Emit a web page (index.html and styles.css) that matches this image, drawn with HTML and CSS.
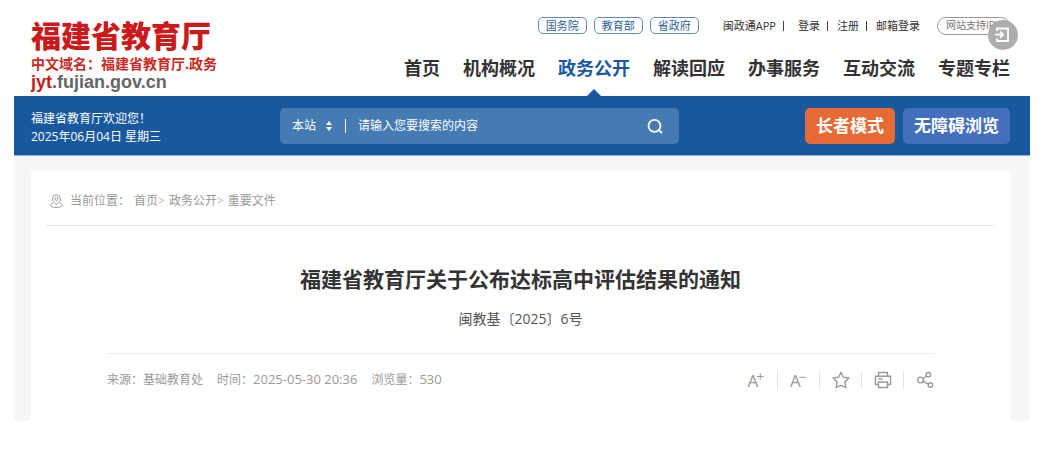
FILE: index.html
```html
<!DOCTYPE html>
<html lang="zh-CN">
<head>
    <meta charset="utf-8">
    <title>福建省教育厅关于公布达标高中评估结果的通知</title>
    <link rel="stylesheet" href="styles.css">
</head>
<body>

<header class="header">
    <div class="logo">
        <div class="logo-name">福建省教育厅</div>
        <div class="logo-domain">中文域名：福建省教育厅.政务</div>
        <div class="logo-url"><span>jyt</span>.fujian.gov.cn</div>
    </div>
    <div class="header-right">
        <div class="top">
            <div class="top-gov">
                <a href="#">国务院</a>
                <a href="#">教育部</a>
                <a href="#">省政府</a>
            </div>
            <div class="top-user">
                <a class="app" href="#">闽政通APP</a><i></i>
                <a class="login" href="#">登录</a><i></i>
                <a href="#">注册</a><i></i>
                <a href="#">邮箱登录</a>
            </div>
            <div class="top-ip">
                <span>网站支持IPV6</span>
                <button class="exit" type="button" aria-label="退出">
                    <svg width="30" height="30" viewBox="0 0 30 30" fill="none" stroke="#fff" stroke-width="1.8">
                        <path d="M9 11V8.500h11v12.500H9V18.500"/>
                        <path d="M7 14.700h8M12 11.500l3.200 3.200-3.200 3.200"/>
                    </svg>
                </button>
            </div>
        </div>
        <nav class="nav">
            <a href="#">首页</a>
            <a href="#">机构概况</a>
            <a class="on" href="#">政务公开</a>
            <a href="#">解读回应</a>
            <a href="#">办事服务</a>
            <a href="#">互动交流</a>
            <a href="#">专题专栏</a>
        </nav>
    </div>
</header>

<div class="bar">
    <div class="welcome">福建省教育厅欢迎您！<br>2025年06月04日 星期三</div>
    <form class="search">
        <select aria-label="搜索范围"><option>本站</option></select>
        <svg class="updown" width="6" height="10" viewBox="0 0 6 10" fill="#fff"><path d="M0 4l3-4 3 4zM0 6l3 4 3-4z"/></svg>
        <i></i>
        <input type="text" placeholder="请输入您要搜索的内容" aria-label="搜索内容">
        <button type="submit" aria-label="搜索">
            <svg width="16" height="16" viewBox="0 0 16 16" fill="none" stroke="#fff" stroke-width="1.8"><circle cx="7.500" cy="7.800" r="6"/><path d="M11.500 11.800l3.500 3.200"/></svg>
        </button>
    </form>
    <div class="modes">
        <button class="elder" type="button">长者模式</button>
        <button class="access" type="button">无障碍浏览</button>
    </div>
</div>

<div class="wrap">
    <main class="panel">
        <div class="crumb">
            <svg width="13" height="14" viewBox="0 0 13 14" fill="none" stroke="#999"><path d="M6.500 11C4 8.500 2.500 6.700 2.500 4.700a4 4 0 0 1 8 0c0 2-1.500 3.800-4 6.300z"/><circle cx="6.500" cy="4.700" r="1.600"/><path d="M3 9.300C1.500 9.700.600 10.300.600 11.200c0 1.400 2.600 2.200 5.900 2.200s5.900-.8 5.900-2.200c0-.9-.9-1.500-2.400-1.900"/></svg>
            <span class="here">当前位置：</span>
            <a href="#">首页</a><b>&gt;</b>
            <a href="#">政务公开</a><b>&gt;</b>
            <a href="#">重要文件</a>
        </div>
        <article class="article">
            <h1>福建省教育厅关于公布达标高中评估结果的通知</h1>
            <p class="number">闽教基〔2025〕6号</p>
            <div class="meta">
                <span>来源：基础教育处</span>
                <span>时间：<em>2025-05-30 20:36</em></span>
                <span>浏览量：<em>530</em></span>
                <div class="tools">
                    <button type="button" aria-label="放大字号">A<sup>+</sup></button>
                    <button type="button" aria-label="缩小字号">A<sup>−</sup></button>
                    <button type="button" aria-label="收藏">
                        <svg width="18" height="18" viewBox="0 0 18 18"><path d="M9 1.500l2.400 4.700 5.300.9-3.700 3.800.8 5.400L9 14.400l-4.800 1.900.8-5.400L1.300 7.100l5.300-.9z"/></svg>
                    </button>
                    <button type="button" aria-label="打印">
                        <svg width="18" height="18" viewBox="0 0 18 18"><path d="M4.500 5V1.500h9V5M4 13.500H1.500V5.300h15v8.200H14M4.500 11h9v5.500h-9zM4.500 8h4"/></svg>
                    </button>
                    <button type="button" aria-label="分享">
                        <svg width="18" height="18" viewBox="0 0 18 18"><circle cx="4.500" cy="9" r="2.900"/><circle cx="12.300" cy="3.700" r="2.200"/><circle cx="14.500" cy="14" r="2.200"/><path d="M6.800 7.500l3.900-2.500M7 10.200l5.400 2.900"/></svg>
                    </button>
                </div>
            </div>
        </article>
    </main>
</div>

</body>
</html>
```

FILE: styles.css
```css
* { box-sizing: border-box; }
body { margin: 0 11px 0 14px; background: #fff; color: #333; font: 12px/18px "Open Sans", "Noto Sans CJK SC", sans-serif; }
a { color: inherit; text-decoration: none; }
button { margin: 0; padding: 0; border: 0; background: none; color: inherit; font: inherit; cursor: pointer; }
svg { display: block; flex: none; }

.header { display: flex; justify-content: space-between; padding: 17px 20px 0 17px; height: 96px; }
.logo { padding-top: 1px; white-space: nowrap; }
.logo-name { color: #cb1a1c; font-size: 30px; font-weight: 900; line-height: 36px; }
.logo-domain { margin-top: 1px; color: #c92a26; font-size: 14px; font-weight: bold; line-height: 17px; }
.logo-url { color: #666; font: bold 18px/20px "Liberation Sans", Arial, sans-serif; }
.logo-url span { color: #cb1a1c; }

.header-right { display: flex; flex-direction: column; justify-content: space-between; align-items: flex-end; white-space: nowrap; }
.top { display: flex; align-items: center; height: 17px; font-size: 11px; line-height: 15px; }
.top-gov { display: flex; gap: 7px; margin-right: 24px; }
.top-gov a { padding: 0 7px; border: 1px solid #5c8bbd; border-radius: 5px; color: #2a62a0; }
.top-user { display: flex; align-items: center; margin-right: 17px; }
.top-user i { width: 1px; height: 10px; margin: 0 9px 0 7px; background: #444; }
.top-user .login { margin-left: 5px; }
.top-ip { position: relative; width: 73px; height: 18px; padding-left: 8px; border: 1px solid #999; border-radius: 9px; color: #777; font-size: 10px; }
.exit { position: absolute; top: 2px; right: -9px; width: 30px; height: 30px; border-radius: 50%; background: #adadad; }

.nav { display: flex; gap: 23px; font-size: 18px; font-weight: bold; line-height: 26px; }
.nav a { padding-bottom: 15px; }
.nav .on { position: relative; color: #18589f; }
.nav .on::after { content: ""; position: absolute; bottom: 0; left: 50%; margin-left: -7px; border: 7px solid transparent; border-top: 0; border-bottom-color: #18589f; }

.bar { display: flex; align-items: center; height: 60px; padding: 0 20px 0 17px; background: #18589f; color: #fff; border-bottom: 1px solid #8fb0d5; }
.welcome { flex: 0 0 249px; padding-top: 4px; }
.search { display: flex; align-items: center; flex: 0 1 399px; height: 36px; padding: 0 16px 0 12px; border-radius: 5px; background: #467ab3; }
.search select { width: 26px; padding: 0; border: 0; appearance: none; background: none; color: #fff; font: inherit; }
.updown { margin-left: 8px; }
.search i { width: 1px; height: 14px; margin: 0 12px 0 13px; background: #fff; }
.search input { flex: 1; min-width: 0; padding: 0; border: 0; outline: 0; background: none; color: #fff; font: inherit; }
.search input::placeholder { color: #fff; opacity: 1; }
.modes { display: flex; gap: 8px; margin-left: auto; }
.modes button { height: 36px; padding: 0 11px; border-radius: 5px; font-size: 17px; font-weight: bold; white-space: nowrap; }
.elder { background: #e66a33; }
.access { background: #446fbd; }

.wrap { padding: 15px 20px 0 17px; background: #f7f7f7; }
.panel { padding: 0 15px 32px; background: #fff; }
.crumb { display: flex; align-items: center; height: 55px; padding: 5px 4px 0; border-bottom: 1px solid #e6e6e6; color: #999; }
.crumb .here { margin: 0 4px 0 7px; }
.crumb b { margin-right: 4px; color: #bbb; font-weight: normal; }
.article { padding: 38px 61px 0; }
.article h1 { margin: 0; color: #333; font-size: 21px; line-height: 30px; text-align: center; }
.number { margin: 14px 0 23px; color: #555; font-size: 14px; line-height: 22px; text-align: center; }
.meta { display: flex; align-items: center; gap: 14px; padding-top: 16px; border-top: 1px solid #eee; color: #999; white-space: nowrap; }
.meta em { font-size: 13px; font-style: normal; }
.tools { display: flex; align-items: center; margin-left: auto; }
.tools button { display: flex; justify-content: center; width: 42px; height: 18px; border-left: 1px solid #e3e3e3; font-size: 17px; line-height: 20px; }
.tools button:first-child { border: 0; }
.tools button:last-child { justify-content: flex-end; width: 31px; }
.tools sup { margin-left: -2px; font-size: 14px; line-height: 12px; }
.tools svg { fill: none; stroke: #999; stroke-width: 1.4; }
```
